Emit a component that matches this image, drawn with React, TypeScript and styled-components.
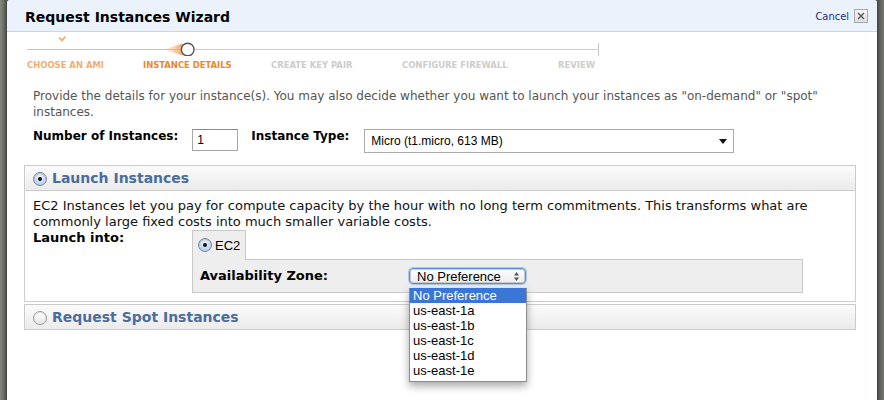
import React from "react";
import styled, { createGlobalStyle } from "styled-components";

const GlobalStyle = createGlobalStyle`
  html, body {
    margin: 0;
    padding: 0;
  }
  body {
    width: 884px;
    height: 400px;
    overflow: hidden;
    font-family: "DejaVu Sans", Verdana, sans-serif;
  }
`;

const Backdrop = styled.div`
  height: 400px;
  background: linear-gradient(
    90deg,
    #868980 0px,
    #50544e 7px,
    #50544e 877px,
    #5a5e57 879px,
    #72766e 884px
  );
`;

const Modal = styled.div`
  position: relative;
  margin-left: 7px;
  width: 870px;
  height: 400px;
  background: #fff;
  border-radius: 3px 3px 0 0;
  box-shadow: 0 0 3px rgba(0, 0, 0, 0.5);
`;

const Header = styled.div`
  display: flex;
  align-items: center;
  height: 31px;
  padding: 0 9px 0 18px;
  background: #ebf2fc;
  border-bottom: 1px solid #c4d7ed;
  border-radius: 3px 3px 0 0;
`;

const Title = styled.h1`
  flex: 1;
  margin: 0;
  padding-top: 2px;
  font: bold 14px "DejaVu Sans", Verdana, sans-serif;
  color: #000;
`;

const CancelLink = styled.a`
  margin-right: 5px;
  padding-top: 1px;
  font: 11px "DejaVu Sans Condensed", "Liberation Sans", Arial, sans-serif;
  color: #1d2a78;
  cursor: pointer;
`;

const CloseBox = styled.button`
  display: flex;
  align-items: center;
  justify-content: center;
  width: 14px;
  height: 14px;
  padding: 0;
  border: 1px solid #a9a9a9;
  background: linear-gradient(#f7f7f7, #dedede);
`;

const Stepper = styled.div`
  padding: 2px 0 0 20px;
`;

const Track = styled.svg`
  display: block;
`;

const StepLabels = styled.div`
  display: flex;
  margin-top: 3px;
`;

const StepLabel = styled.div<{ $w?: number; $state: "done" | "current" | "todo" }>`
  width: ${(p) => (p.$w ? `${p.$w}px` : "auto")};
  font: bold 9.4px "DejaVu Sans Condensed", "Liberation Sans", Tahoma, sans-serif;
  line-height: 12px;
  color: ${(p) =>
    p.$state === "done" ? "#f2ad72" : p.$state === "current" ? "#e9882d" : "#cccccc"};
  white-space: nowrap;
`;

const Content = styled.div`
  padding: 0 21px 0 17px;
`;

const Intro = styled.p`
  margin: 17px 0 0 9px;
  font-size: 12px;
  line-height: 16px;
  color: #555;
`;

const FormRow = styled.div`
  display: flex;
  align-items: flex-start;
  margin: 8px 0 0 9px;
`;

const FieldLabel = styled.label<{ $gap?: number }>`
  margin-left: ${(p) => p.$gap ?? 0}px;
  font-weight: bold;
  font-size: 12px;
  line-height: 16px;
  color: #000;
`;

const NumberInput = styled.input`
  box-sizing: border-box;
  width: 46px;
  height: 22px;
  margin: 1px 0 0 14px;
  padding: 0 0 0 4px;
  border: 1px solid #a6a6a6;
  border-top-color: #8a8a8a;
  font: 12px "Liberation Sans", Arial, sans-serif;
  color: #000;
  outline: none;
`;

const TypeSelect = styled.div`
  box-sizing: border-box;
  display: flex;
  align-items: center;
  width: 370px;
  height: 24px;
  margin: 1px 0 0 15px;
  padding: 0 6px 0 6px;
  border: 1px solid #ababab;
  background: #fff;
  font: 12px "Liberation Sans", Arial, sans-serif;
  color: #000;
`;

const SelectText = styled.span`
  flex: 1;
`;

const Section = styled.div<{ $gap: number }>`
  margin-top: ${(p) => p.$gap}px;
  border: 1px solid #cbcbcb;
`;

const SectionHeader = styled.div<{ $open?: boolean }>`
  display: flex;
  align-items: center;
  height: 24px;
  padding-left: 8px;
  background: linear-gradient(#fbfbfb, #ebebeb);
  border-bottom: ${(p) => (p.$open ? "1px solid #cbcbcb" : "none")};
`;

const SectionTitle = styled.span`
  margin-left: 5px;
  font: bold 14px "DejaVu Sans", Verdana, sans-serif;
  color: #4b6d9c;
`;

const Radio = styled.span<{ $checked?: boolean; $drop?: number }>`
  position: relative;
  box-sizing: border-box;
  flex: none;
  width: 14px;
  height: 14px;
  margin-top: ${(p) => p.$drop ?? 0}px;
  border-radius: 50%;
  border: 1px solid ${(p) => (p.$checked ? "#7d8694" : "#9a9a9a")};
  background: ${(p) =>
    p.$checked
      ? "radial-gradient(circle at 50% 35%, #eef4fc 0%, #b9d0ee 70%, #a3bfe6 100%)"
      : "linear-gradient(#ffffff, #e6e6e6)"};
  box-shadow: inset 0 1px 1px rgba(0, 0, 0, 0.12);

  &::after {
    content: "";
    display: ${(p) => (p.$checked ? "block" : "none")};
    position: absolute;
    left: 4px;
    top: 4px;
    width: 4px;
    height: 4px;
    border-radius: 50%;
    background: #111;
  }
`;

const SectionBody = styled.div`
  padding: 7px 8px 8px 8px;
  font-size: 13px;
  line-height: 16px;
  color: #111;
`;

const BodyText = styled.p`
  margin: 0;
`;

const LaunchRow = styled.div`
  display: flex;
  align-items: flex-start;
`;

const LaunchLabel = styled.div`
  width: 159px;
  font-weight: bold;
  line-height: 16px;
  color: #000;
`;

const TabGroup = styled.div`
  display: flex;
  flex-direction: column;
`;

const Tab = styled.div`
  position: relative;
  z-index: 1;
  box-sizing: border-box;
  display: flex;
  align-items: center;
  width: 54px;
  height: 30px;
  margin-bottom: -1px;
  padding: 0 0 1px 5px;
  border: 1px solid #c9c9c9;
  border-bottom: none;
  background: #eeeeee;
`;

const TabText = styled.span`
  margin-left: 3px;
  font: 13px "Liberation Sans", Arial, sans-serif;
  color: #000;
`;

const TabPanel = styled.div`
  box-sizing: border-box;
  display: flex;
  align-items: center;
  width: 611px;
  height: 34px;
  padding: 0 7px;
  border: 1px solid #c9c9c9;
  background: #eeeeee;
`;

const ZoneLabel = styled.span`
  width: 209px;
  font-weight: bold;
  font-size: 13px;
  color: #000;
`;

const ZoneSelect = styled.div`
  position: relative;
  box-sizing: border-box;
  display: flex;
  align-items: center;
  width: 117px;
  height: 16px;
  padding: 0 6px 0 7px;
  border: 1px solid #5d8fd6;
  border-radius: 4px;
  box-shadow: 0 0 0 1px #a9c8f0, inset 0 0 0 1px #c9c9c9;
  background: linear-gradient(#ffffff, #ececec);
  font: 13px "Liberation Sans", Arial, sans-serif;
  color: #000;
`;

const Dropdown = styled.ul`
  position: absolute;
  z-index: 5;
  top: 19px;
  left: -1px;
  box-sizing: border-box;
  width: 118px;
  margin: 0;
  padding: 0 0 3px 0;
  list-style: none;
  background: #fff;
  border: 1px solid #8d8d8d;
  border-top: none;
  box-shadow: 0 4px 8px rgba(0, 0, 0, 0.35);
`;

const Option = styled.li<{ $active?: boolean }>`
  height: 15px;
  padding-left: 3px;
  font: 13px/15px "Liberation Sans", Arial, sans-serif;
  color: ${(p) => (p.$active ? "#fff" : "#000")};
  background: ${(p) => (p.$active ? "#3a76d8" : "transparent")};
`;

const zones = ["No Preference", "us-east-1a", "us-east-1b", "us-east-1c", "us-east-1d", "us-east-1e"];

const steps: { label: string; w?: number; state: "done" | "current" | "todo" }[] = [
  { label: "CHOOSE AN AMI", w: 116, state: "done" },
  { label: "INSTANCE DETAILS", w: 128, state: "current" },
  { label: "CREATE KEY PAIR", w: 131, state: "todo" },
  { label: "CONFIGURE FIREWALL", w: 156, state: "todo" },
  { label: "REVIEW", state: "todo" },
];

const StepTrack = () => (
  <Track width="590" height="22" viewBox="0 0 590 22">
    <defs>
      <linearGradient id="glow" x1="0" x2="1" y1="0" y2="0">
        <stop offset="0" stopColor="#f7b37a" stopOpacity="0" />
        <stop offset="1" stopColor="#f19a4c" stopOpacity="0.9" />
      </linearGradient>
    </defs>
    <path d="M32 3.5 L35 6.5 L38.5 2.5" fill="none" stroke="#f0a868" strokeWidth="1.6" />
    <line x1="0" y1="15.5" x2="155" y2="15.5" stroke="#f2b98a" strokeWidth="1" />
    <polygon points="136,15.5 156,9.5 156,21.5" fill="url(#glow)" />
    <line x1="167" y1="15.5" x2="571" y2="15.5" stroke="#cfcfcf" strokeWidth="1" />
    <line x1="571.5" y1="9" x2="571.5" y2="22" stroke="#c8c8c8" strokeWidth="1" />
    <circle cx="160.7" cy="15.5" r="6.3" fill="#fff" stroke="#555" strokeWidth="1.4" />
  </Track>
);

const DownTriangle = () => (
  <svg width="8" height="5" viewBox="0 0 8 5">
    <path d="M0 0 H8 L4 5 Z" fill="#111" />
  </svg>
);

const UpDownArrows = () => (
  <svg width="5" height="9" viewBox="0 0 5 9">
    <path d="M0 3.5 L2.5 0 L5 3.5 Z" fill="#555" />
    <path d="M0 5.5 L2.5 9 L5 5.5 Z" fill="#555" />
  </svg>
);

export default function App() {
  return (
    <>
      <GlobalStyle />
      <Backdrop>
        <Modal>
          <Header>
            <Title>Request Instances Wizard</Title>
            <CancelLink>Cancel</CancelLink>
            <CloseBox type="button" title="Close">
              <svg width="8" height="8" viewBox="0 0 8 8">
                <path d="M1 1 L7 7 M7 1 L1 7" stroke="#555" strokeWidth="1.4" />
              </svg>
            </CloseBox>
          </Header>

          <Stepper>
            <StepTrack />
            <StepLabels>
              {steps.map((s) => (
                <StepLabel key={s.label} $w={s.w} $state={s.state}>
                  {s.label}
                </StepLabel>
              ))}
            </StepLabels>
          </Stepper>

          <Content>
            <Intro>
              Provide the details for your instance(s). You may also decide whether you want to
              launch your instances as "on-demand" or "spot" instances.
            </Intro>

            <FormRow>
              <FieldLabel>Number of Instances:</FieldLabel>
              <NumberInput defaultValue="1" />
              <FieldLabel $gap={13}>Instance Type:</FieldLabel>
              <TypeSelect>
                <SelectText>Micro (t1.micro, 613 MB)</SelectText>
                <DownTriangle />
              </TypeSelect>
            </FormRow>

            <Section $gap={12}>
              <SectionHeader $open>
                <Radio $checked $drop={2} />
                <SectionTitle>Launch Instances</SectionTitle>
              </SectionHeader>
              <SectionBody>
                <BodyText>
                  EC2 Instances let you pay for compute capacity by the hour with no long term
                  commitments. This transforms what are commonly large fixed costs into much
                  smaller variable costs.
                </BodyText>
                <LaunchRow>
                  <LaunchLabel>Launch into:</LaunchLabel>
                  <TabGroup>
                    <Tab>
                      <Radio $checked />
                      <TabText>EC2</TabText>
                    </Tab>
                    <TabPanel>
                      <ZoneLabel>Availability Zone:</ZoneLabel>
                      <ZoneSelect>
                        <SelectText>No Preference</SelectText>
                        <UpDownArrows />
                        <Dropdown>
                          {zones.map((z, i) => (
                            <Option key={z} $active={i === 0}>
                              {z}
                            </Option>
                          ))}
                        </Dropdown>
                      </ZoneSelect>
                    </TabPanel>
                  </TabGroup>
                </LaunchRow>
              </SectionBody>
            </Section>

            <Section $gap={2}>
              <SectionHeader>
                <Radio $drop={1} />
                <SectionTitle>Request Spot Instances</SectionTitle>
              </SectionHeader>
            </Section>
          </Content>
        </Modal>
      </Backdrop>
    </>
  );
}
